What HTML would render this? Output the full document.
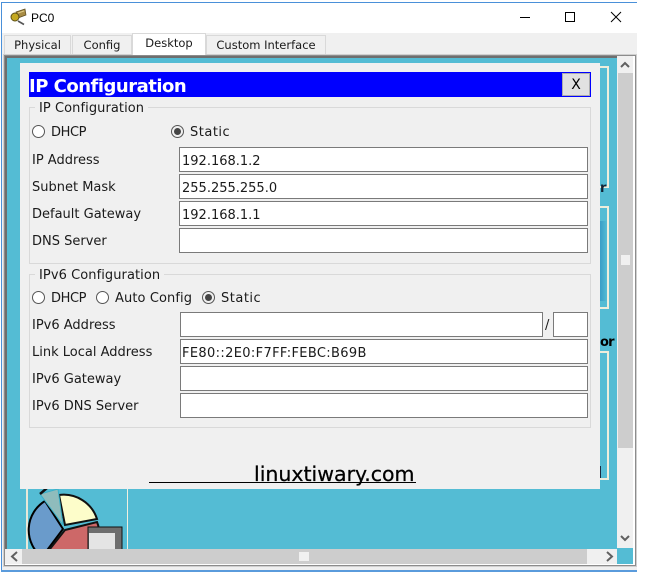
<!DOCTYPE html>
<html><head><meta charset="utf-8">
<style>
html,body{margin:0;padding:0;background:#fff}
body{width:646px;height:573px;position:relative;overflow:hidden;font-family:"DejaVu Sans","Liberation Sans",sans-serif;font-size:13px;color:#1a1a1a}
.a{position:absolute;box-sizing:border-box}
.t{position:absolute;white-space:nowrap;line-height:16px}
.tab{position:absolute;box-sizing:border-box;background:#f0f0f0;border:1px solid #d9d9d9;border-bottom:0;text-align:center;font-size:11.5px;line-height:19px;top:35px;height:19px}
.in{position:absolute;box-sizing:border-box;background:#fff;border:1px solid #7a7a7a;height:25px;padding-left:2px;line-height:27px;color:#1a1a1a}
.fs{position:absolute;box-sizing:border-box;border:1px solid #d9d9d9;left:29px;width:562px}
.lg{position:absolute;background:#f0f0f0;padding:0 4px;left:35px;line-height:16px;white-space:nowrap;letter-spacing:.07px}
.r{position:absolute;box-sizing:border-box;width:13px;height:13px;border-radius:50%;border:1.5px solid #555;background:#fff}
.r.on{background:#f0f0f0}
.r.on::after{content:"";position:absolute;left:1.5px;top:1.5px;width:7px;height:7px;border-radius:50%;background:#444}
.st{letter-spacing:.5px}
.dh{letter-spacing:-.4px}
</style></head>
<body>
<!-- window -->
<div class="a" style="left:1px;top:2px;width:636px;height:570px;background:#f0f0f0;border:1px solid #4a90d9;border-width:1px 0 0 1px"></div>
<div class="a" style="left:1px;top:570px;width:636px;height:2px;background:#5a9bdc"></div>
<div class="a" style="left:2px;top:3px;width:635px;height:30px;background:#fff"></div>
<div class="a" style="left:637px;top:2px;width:9px;height:571px;background:#fff"></div>

<svg class="a" style="left:10px;top:8px" width="17" height="18" viewBox="0 0 17 18">
<path d="M6 4L15 1L16 7L8 10Z" fill="#a88c44" stroke="#5c4c20" stroke-width=".7"/>
<path d="M8 5L14 3" stroke="#e0cc88" stroke-width="1"/>
<circle cx="5" cy="9" r="4" fill="#c4a820" stroke="#5c5018" stroke-width="1"/>
<path d="M8 13L14 16.5" stroke="#555" stroke-width="1.6"/>
</svg>
<div class="t" style="left:31px;top:10px;font-family:'Liberation Sans',sans-serif;font-size:12px;color:#000">PC0</div>
<!-- window controls -->
<svg class="a" style="left:515px;top:8px" width="120" height="20" viewBox="0 0 120 20">
<path d="M5 9.5H15" stroke="#000" fill="none"/>
<rect x="50.5" y="4.5" width="9" height="9" fill="none" stroke="#000"/>
<path d="M96 4L106 14M106 4L96 14" stroke="#000" fill="none"/>
</svg>

<!-- tabs -->
<div class="tab" style="left:4px;width:67px">Physical</div>
<div class="tab" style="left:72px;width:60px">Config</div>
<div class="tab" style="left:132px;width:74px;top:33px;height:22px;background:#fff;z-index:2">Desktop</div>
<div class="tab" style="left:206px;width:120px">Custom Interface</div>

<!-- frame -->
<div class="a" style="left:3px;top:54px;width:634px;height:513px;background:#fff;border:1px solid #d0d0d0"></div>
<div class="a" style="left:4px;top:55px;width:632px;height:511px;border:1px solid #8c8c8c;background:#fff"></div>
<div class="a" style="left:5px;top:56px;width:612px;height:493px;background:#54bcd4;overflow:hidden">
  <div class="a" style="left:0;top:0;width:612px;height:2px;background:#6e6e6e"></div>
  <div class="a" style="left:0;top:0;width:2px;height:493px;background:#6e6e6e"></div>
  <div class="a" style="left:21px;top:433px;width:2px;height:60px;background:#e8e8d8"></div>
  <div class="a" style="left:122px;top:433px;width:1px;height:60px;background:#f0f0e0"></div>
  <div class="a" style="left:590px;top:10px;width:13px;height:2px;background:#eeeedc"></div>
  <div class="a" style="left:602px;top:10px;width:2px;height:122px;background:#eeeedc"></div>
  <div class="a" style="left:590px;top:130px;width:14px;height:2px;background:#eeeedc"></div>
  <div class="a" style="left:590px;top:150px;width:14px;height:2px;background:#eeeedc"></div>
  <div class="a" style="left:602px;top:150px;width:2px;height:103px;background:#eeeedc"></div>
  <div class="a" style="left:590px;top:251px;width:14px;height:2px;background:#eeeedc"></div>
  <div class="a" style="left:590px;top:295px;width:14px;height:2px;background:#eeeedc"></div>
  <div class="a" style="left:602px;top:295px;width:2px;height:128px;background:#eeeedc"></div>
  <div class="a" style="left:590px;top:422px;width:14px;height:2px;background:#eeeedc"></div>
  <div class="a" style="left:595px;top:165px;width:7px;height:80px;background:linear-gradient(90deg,rgba(50,150,195,.8),rgba(84,188,212,.1))"></div>
  <div class="a" style="left:595px;top:410px;width:1px;height:12px;background:#1a2a40"></div>
  <div class="t" style="left:595px;top:125px;font-weight:bold;color:#123">r</div>
  <div class="t" style="left:595px;top:279px;font-weight:bold;color:#000;letter-spacing:-.8px">or</div>
</div>
<!-- pie -->
<svg class="a" style="left:20px;top:489px" width="105" height="60" viewBox="0 0 105 60">
  <path d="M43 40L25 12A34 34 0 0 0 22 68Z" fill="#6a9bcb" stroke="#000" stroke-width="2"/>
  <path d="M45 36L39 6A35 35 0 0 1 77 30Z" fill="#fdfdca" stroke="#111" stroke-width="2"/>
  <path d="M45 41L77 33A35 35 0 0 1 70 70L22 70Z" fill="#cd6868" stroke="#111" stroke-width="2"/>
  <path d="M20 5L38 0L43 36Z" fill="#8fbcbc" stroke="#3ab0c8" stroke-width="1"/>
  <path d="M20 5L27 -1" stroke="#111" stroke-width="2.5"/>
  <rect x="68" y="38" width="34" height="24" fill="#6e6e6e" stroke="#111" stroke-width="1"/>
  <rect x="69" y="44" width="26" height="18" fill="#e4e4e4"/>
</svg>

<!-- dialog -->
<div class="a" style="left:20px;top:63px;width:580px;height:426px;background:#f0f0f0"></div>
<div class="a" style="left:29px;top:72px;width:562px;height:25px;background:#0000ff"></div>
<div class="t" style="left:29px;top:76px;font-size:18px;line-height:21px;font-weight:bold;color:#fff;letter-spacing:-.5px">IP Configuration</div>
<div class="a" style="left:562px;top:73px;width:28px;height:23px;background:#e1e1e1;border:1px solid #adadad;text-align:center;line-height:22px;font-size:14px;color:#000">X</div>

<div class="fs" style="top:107px;height:157px"></div>
<div class="lg" style="top:101px">IP Configuration</div>
<div class="r" style="left:32px;top:125px"></div><div class="t dh" style="left:51px;top:125px">DHCP</div>
<div class="r on" style="left:171px;top:125px"></div><div class="t st" style="left:190px;top:125px">Static</div>

<div class="t" style="left:32px;top:153px">IP Address</div>
<div class="in" style="left:179px;top:147px;width:409px">192.168.1.2</div>
<div class="t" style="left:32px;top:180px">Subnet Mask</div>
<div class="in" style="left:179px;top:174px;width:409px">255.255.255.0</div>
<div class="t" style="left:32px;top:207px">Default Gateway</div>
<div class="in" style="left:179px;top:201px;width:409px">192.168.1.1</div>
<div class="t" style="left:32px;top:234px">DNS Server</div>
<div class="in" style="left:179px;top:228px;width:409px"></div>

<div class="fs" style="top:274px;height:154px"></div>
<div class="lg" style="top:268px">IPv6 Configuration</div>
<div class="r" style="left:32px;top:291px"></div><div class="t dh" style="left:51px;top:291px">DHCP</div>
<div class="r" style="left:96px;top:291px"></div><div class="t" style="left:115px;top:291px;letter-spacing:.1px">Auto Config</div>
<div class="r on" style="left:202px;top:291px"></div><div class="t st" style="left:221px;top:291px">Static</div>

<div class="t" style="left:32px;top:318px">IPv6 Address</div>
<div class="in" style="left:180px;top:312px;width:363px"></div>
<div class="t" style="left:545px;top:318px">/</div>
<div class="in" style="left:553px;top:312px;width:35px"></div>
<div class="t" style="left:32px;top:345px">Link Local Address</div>
<div class="in" style="left:180px;top:339px;width:408px;letter-spacing:.35px;padding-left:1px">FE80::2E0:F7FF:FEBC:B69B</div>
<div class="t" style="left:32px;top:372px">IPv6 Gateway</div>
<div class="in" style="left:180px;top:366px;width:408px"></div>
<div class="t" style="left:32px;top:399px">IPv6 DNS Server</div>
<div class="in" style="left:180px;top:393px;width:408px"></div>

<!-- watermark -->
<div class="t" style="left:254px;top:462px;font-size:20.5px;line-height:24px;color:#000;-webkit-text-stroke:.25px #000">linuxtiwary.com</div>
<div class="a" style="left:149px;top:482px;width:267px;height:1px;background:#000"></div>

<!-- v scrollbar -->
<div class="a" style="left:617px;top:56px;width:16px;height:493px;background:#f0f0f0"></div>
<div class="a" style="left:618px;top:73px;width:15px;height:375px;background:#cdcdcd"></div>
<div class="a" style="left:621px;top:255px;width:9px;height:10px;background:#f0f0f0"></div>
<svg class="a" style="left:617px;top:58px" width="16" height="490" viewBox="0 0 16 490">
<path d="M4 9L8 5L12 9" fill="none" stroke="#606060" stroke-width="2"/>
<path d="M4 478L8 482L12 478" fill="none" stroke="#606060" stroke-width="2"/>
</svg>
<!-- h scrollbar -->
<div class="a" style="left:5px;top:549px;width:612px;height:15px;background:#f0f0f0"></div>
<div class="a" style="left:22px;top:549px;width:565px;height:15px;background:#cdcdcd"></div>
<div class="a" style="left:299px;top:552px;width:10px;height:9px;background:#f0f0f0"></div>
<div class="a" style="left:617px;top:548px;width:16px;height:16px;background:#54bcd4"></div>
<svg class="a" style="left:5px;top:549px" width="612" height="15" viewBox="0 0 612 15">
<path d="M12 3L7 7.5L12 12" fill="none" stroke="#606060" stroke-width="2"/>
<path d="M602 3L607 7.5L602 12" fill="none" stroke="#606060" stroke-width="2"/>
</svg>
</body></html>
